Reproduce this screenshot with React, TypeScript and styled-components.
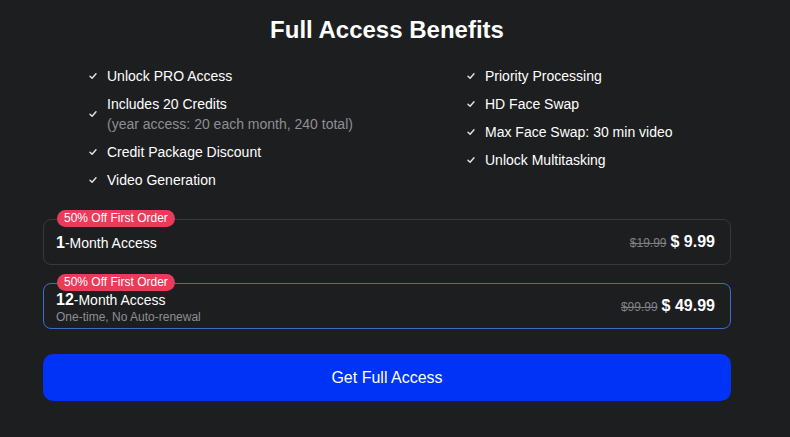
import React from 'react';
import styled, { createGlobalStyle } from 'styled-components';

const GlobalStyle = createGlobalStyle`
  body {
    margin: 0;
    background: #1d1e20;
    font-family: 'Liberation Sans', Arial, sans-serif;
    color: #ffffff;
  }
`;

const Page = styled.div`
  width: 790px;
  height: 437px;
  box-sizing: border-box;
  padding: 16px 59px 0 43px;
  background: #1d1e20;
`;

const Title = styled.h1`
  margin: 0;
  text-align: center;
  font-size: 24px;
  line-height: 28px;
  font-weight: 700;
`;

const Benefits = styled.div`
  display: grid;
  grid-template-columns: 378px 1fr;
  padding-left: 46px;
  margin-top: 22px;
`;

const Column = styled.ul`
  list-style: none;
  margin: 0;
  padding: 0;
  display: flex;
  flex-direction: column;
  gap: 8px;
`;

const Item = styled.li`
  display: flex;
  align-items: center;
  gap: 10px;
  font-size: 14px;
  line-height: 20px;
`;

const ItemText = styled.div`
  display: flex;
  flex-direction: column;
`;

const Sub = styled.span`
  color: #8e8f93;
  font-size: 14px;
  line-height: 20px;
`;

const Check = () => (
  <svg width="8" height="8" viewBox="0 0 8 8" style={{ flexShrink: 0 }}>
    <path d="M1 4.2 L3.1 6.2 L7 1.8" fill="none" stroke="#e6e6e6" strokeWidth="1.4" strokeLinecap="round" strokeLinejoin="round" />
  </svg>
);

const Plans = styled.div`
  display: flex;
  flex-direction: column;
  gap: 18px;
  margin-top: 29px;
`;

const Card = styled.div<{ $active?: boolean }>`
  position: relative;
  height: 46px;
  box-sizing: border-box;
  border: 1px solid ${(p) => (p.$active ? '#3d6ccb' : '#38393c')};
  border-radius: 8px;
  display: flex;
  align-items: center;
  justify-content: space-between;
  padding: 0 15px 0 12px;
`;

const Badge = styled.span`
  position: absolute;
  top: -10px;
  left: 13px;
  background: #ea3b5b;
  color: #ffffff;
  font-size: 12px;
  line-height: 17px;
  padding: 0 7px;
  border-radius: 9px;
`;

const PlanInfo = styled.div<{ $withSub?: boolean }>`
  display: flex;
  flex-direction: column;
  margin-top: ${(p) => (p.$withSub ? '3px' : '1px')};
`;

const PlanName = styled.div`
  font-size: 14px;
  line-height: 18px;
  b {
    font-size: 16px;
  }
`;

const PlanSub = styled.div`
  font-size: 12px;
  line-height: 16px;
  color: #8e8f93;
`;

const Price = styled.div`
  display: flex;
  align-items: baseline;
  gap: 4px;
`;

const OldPrice = styled.span`
  font-size: 12px;
  color: #808185;
  text-decoration: line-through;
`;

const NewPrice = styled.span`
  font-size: 16px;
  font-weight: 700;
`;

const CtaButton = styled.button`
  display: block;
  width: 100%;
  height: 47px;
  margin-top: 25px;
  border: none;
  border-radius: 10px;
  background: #0033f5;
  color: #ffffff;
  font-family: 'Liberation Sans', Arial, sans-serif;
  font-size: 16px;
  cursor: pointer;
`;

const left = [
  { text: 'Unlock PRO Access' },
  { text: 'Includes 20 Credits', sub: '(year access: 20 each month, 240 total)' },
  { text: 'Credit Package Discount' },
  { text: 'Video Generation' },
];

const right = [
  { text: 'Priority Processing' },
  { text: 'HD Face Swap' },
  { text: 'Max Face Swap: 30 min video' },
  { text: 'Unlock Multitasking' },
];

function BenefitList({ items }: { items: { text: string; sub?: string }[] }) {
  return (
    <Column>
      {items.map((it) => (
        <Item key={it.text}>
          <Check />
          <ItemText>
            {it.text}
            {it.sub && <Sub>{it.sub}</Sub>}
          </ItemText>
        </Item>
      ))}
    </Column>
  );
}

export default function App() {
  return (
    <>
      <GlobalStyle />
      <Page>
        <Title>Full Access Benefits</Title>
        <Benefits>
          <BenefitList items={left} />
          <BenefitList items={right} />
        </Benefits>
        <Plans>
          <Card>
            <Badge>50% Off First Order</Badge>
            <PlanInfo>
              <PlanName>
                <b>1</b>-Month Access
              </PlanName>
            </PlanInfo>
            <Price>
              <OldPrice>$19.99</OldPrice>
              <NewPrice>$ 9.99</NewPrice>
            </Price>
          </Card>
          <Card $active>
            <Badge>50% Off First Order</Badge>
            <PlanInfo $withSub>
              <PlanName>
                <b>12</b>-Month Access
              </PlanName>
              <PlanSub>One-time, No Auto-renewal</PlanSub>
            </PlanInfo>
            <Price>
              <OldPrice>$99.99</OldPrice>
              <NewPrice>$ 49.99</NewPrice>
            </Price>
          </Card>
        </Plans>
        <CtaButton>Get Full Access</CtaButton>
      </Page>
    </>
  );
}
